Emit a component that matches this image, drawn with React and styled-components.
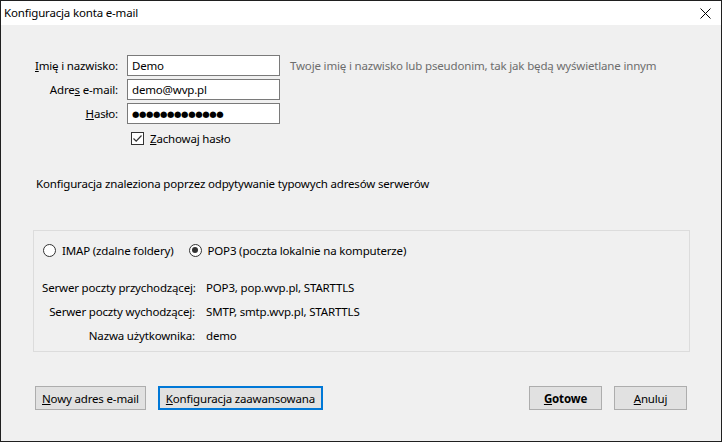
import React from 'react'
import styled, { createGlobalStyle } from 'styled-components'

const GlobalStyle = createGlobalStyle`
  html, body {
    margin: 0;
    padding: 0;
    background: #f0f0f0;
  }
  * {
    box-sizing: border-box;
  }
`

const FONT = `'Noto Sans', 'Open Sans', sans-serif`

const Window = styled.div`
  width: 722px;
  height: 442px;
  border: 1px solid #1f1f1f;
  display: flex;
  flex-direction: column;
  font-family: ${FONT};
  font-size: 11.5px;
  letter-spacing: -0.17px;
  color: #000;
  background: #f0f0f0;
`

const TitleBar = styled.div`
  height: 24px;
  flex: none;
  background: #fff;
  display: flex;
  align-items: center;
  justify-content: space-between;
  padding: 0 10px 0 3px;
`

const Title = styled.span`
  line-height: 16px;
`

const Content = styled.div`
  flex: 1;
  display: flex;
  flex-direction: column;
  padding: 30px 31px 0 32px;
`

const FormGrid = styled.div`
  display: grid;
  grid-template-columns: 85px 153px auto;
  grid-auto-rows: 21px;
  column-gap: 9px;
  row-gap: 3px;
  align-items: center;
`

const FieldLabel = styled.label`
  text-align: right;
  white-space: nowrap;
`

const TextInput = styled.input`
  width: 153px;
  height: 21px;
  border: 1px solid #7a7a7a;
  background: #fff;
  padding: 0 4px;
  font-family: ${FONT};
  font-size: 11.5px;
  letter-spacing: -0.17px;
  color: #000;
  outline: none;
  margin: 0;
`

const SecretInput = styled(TextInput)`
  font-family: 'DejaVu Sans', sans-serif;
  font-size: 8.5px;
  letter-spacing: -0.4px;
`

const Hint = styled.span`
  color: #6d6d6d;
  padding-left: 1px;
  white-space: nowrap;
`

const CheckRow = styled.label`
  grid-column: 2 / 4;
  display: flex;
  align-items: center;
  gap: 6px;
  height: 20px;
  margin-top: 1px;
  padding-left: 4px;
`

const CheckBox = styled.span`
  width: 13px;
  height: 13px;
  border: 1px solid #333;
  background: #fff;
  display: flex;
  align-items: center;
  justify-content: center;
`

const InfoText = styled.div`
  margin-top: 28px;
  line-height: 16px;
  padding-left: 3px;
`

const GroupBox = styled.div`
  margin-top: 38px;
  border: 1px solid #dcdcdc;
  padding: 9px 9px 4px 8px;
`

const RadioRow = styled.div`
  display: flex;
  align-items: center;
  height: 20px;
  padding-left: 1px;
`

const RadioOption = styled.label`
  display: flex;
  align-items: center;
  gap: 6px;
  margin-right: 15px;
`

const RadioCircle = styled.span`
  width: 13px;
  height: 13px;
  border-radius: 50%;
  border: 1px solid #333;
  background: #fff;
  display: flex;
  align-items: center;
  justify-content: center;
  &::after {
    content: '';
    width: 6px;
    height: 6px;
    border-radius: 50%;
    background: ${p => (p.$checked ? '#333' : 'transparent')};
  }
`

const ServerGrid = styled.div`
  margin-top: 15px;
  display: grid;
  grid-template-columns: 153px auto;
  grid-auto-rows: 24px;
  column-gap: 11px;
  align-items: center;
`

const ServerLabel = styled.span`
  text-align: right;
  white-space: nowrap;
`

const ServerValue = styled.span`
  white-space: nowrap;
`

const ButtonRow = styled.div`
  margin-top: 34px;
  display: flex;
  justify-content: space-between;
  padding: 0 3px 0 2px;
`

const ButtonGroup = styled.div`
  display: flex;
  gap: 12px;
`

const Button = styled.button`
  height: 24px;
  min-width: ${p => (p.$fixed ? '73px' : '0')};
  margin: 0;
  background: #e1e1e1;
  border: ${p => (p.$focused ? '2px solid #0078d7' : '1px solid #adadad')};
  padding: 0 6px;
  font-family: ${FONT};
  font-size: 11.5px;
  letter-spacing: -0.17px;
  font-weight: ${p => (p.$bold ? 700 : 400)};
  color: #000;
  cursor: default;
  outline: none;
`

const CloseIcon = () => (
  <svg width="11" height="11" viewBox="0 0 11 11">
    <path d="M0.5 0.5 L10.5 10.5 M10.5 0.5 L0.5 10.5" stroke="#000" strokeWidth="1" fill="none" />
  </svg>
)

const CheckMark = () => (
  <svg width="11" height="11" viewBox="0 0 11 11">
    <path d="M1.5 5.5 L4.2 8.2 L9.5 2.5" stroke="#333" strokeWidth="1.2" fill="none" />
  </svg>
)

const servers = [
  ['Serwer poczty przychodzącej:', 'POP3, pop.wvp.pl, STARTTLS'],
  ['Serwer poczty wychodzącej:', 'SMTP, smtp.wvp.pl, STARTTLS'],
  ['Nazwa użytkownika:', 'demo']
]

export default function App() {
  return (
    <>
      <GlobalStyle />
      <Window>
        <TitleBar>
          <Title>Konfiguracja konta e-mail</Title>
          <CloseIcon />
        </TitleBar>
        <Content>
          <FormGrid>
            <FieldLabel htmlFor="name">
              <u>I</u>mię i nazwisko:
            </FieldLabel>
            <TextInput id="name" defaultValue="Demo" />
            <Hint>Twoje imię i nazwisko lub pseudonim, tak jak będą wyświetlane innym</Hint>

            <FieldLabel htmlFor="email">
              Adre<u>s</u> e-mail:
            </FieldLabel>
            <TextInput id="email" defaultValue="demo@wvp.pl" />
            <span />

            <FieldLabel htmlFor="pass">
              <u>H</u>asło:
            </FieldLabel>
            <SecretInput id="pass" readOnly value={'●'.repeat(13)} />
            <span />

            <span />
            <CheckRow>
              <CheckBox>
                <CheckMark />
              </CheckBox>
              <span>
                <u>Z</u>achowaj hasło
              </span>
            </CheckRow>
          </FormGrid>

          <InfoText>Konfiguracja znaleziona poprzez odpytywanie typowych adresów serwerów</InfoText>

          <GroupBox>
            <RadioRow>
              <RadioOption>
                <RadioCircle />
                <span>IMAP (zdalne foldery)</span>
              </RadioOption>
              <RadioOption>
                <RadioCircle $checked />
                <span>POP3 (poczta lokalnie na komputerze)</span>
              </RadioOption>
            </RadioRow>
            <ServerGrid>
              {servers.map(([label, value]) => (
                <React.Fragment key={label}>
                  <ServerLabel>{label}</ServerLabel>
                  <ServerValue>{value}</ServerValue>
                </React.Fragment>
              ))}
            </ServerGrid>
          </GroupBox>

          <ButtonRow>
            <ButtonGroup>
              <Button>
                <u>N</u>owy adres e-mail
              </Button>
              <Button $focused>
                <u>K</u>onfiguracja zaawansowana
              </Button>
            </ButtonGroup>
            <ButtonGroup>
              <Button $fixed $bold>
                <u>G</u>otowe
              </Button>
              <Button $fixed>
                <u>A</u>nuluj
              </Button>
            </ButtonGroup>
          </ButtonRow>
        </Content>
      </Window>
    </>
  )
}
